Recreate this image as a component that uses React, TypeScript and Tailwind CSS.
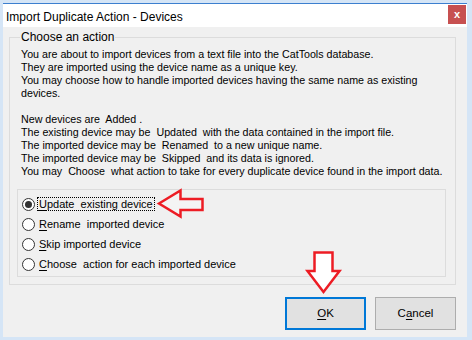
import { ReactNode } from 'react';

const ui = { fontFamily: '"Liberation Sans", Arial, sans-serif' };

function Key({ children }: { children: ReactNode }) {
  return <span className="underline underline-offset-[2px]">{children}</span>;
}

function Radio({ checked, children }: { checked?: boolean; children: ReactNode }) {
  return (
    <div className="flex items-center h-[20px]">
      <span className="w-[13px] h-[13px] rounded-full border border-[#333] bg-white flex items-center justify-center shrink-0">
        {checked && <span className="w-[7px] h-[7px] rounded-full bg-[#333]" />}
      </span>
      <span className={`ml-[3px] px-[1px] leading-[12px] whitespace-pre ${checked ? 'outline outline-1 outline-dotted outline-black' : ''}`}>
        {children}
      </span>
    </div>
  );
}

export default function App() {
  const info = [
    'You are about to import devices from a text file into the CatTools database.',
    'They are imported using the device name as a unique key.',
    'You may choose how to handle imported devices having the same name as existing',
    'devices.',
    '\u00a0',
    'New devices are  Added .',
    'The existing device may be  Updated  with the data contained in the import file.',
    'The imported device may be  Renamed  to a new unique name.',
    'The imported device may be  Skipped  and its data is ignored.',
    'You may  Choose  what action to take for every duplicate device found in the import data.',
  ];

  return (
    <div className="relative w-[472px] h-[340px] overflow-hidden bg-[#d5e5f6] pl-[3px] pt-[3px]" style={ui}>
      {/* dialog window */}
      <div className="w-[464px] h-[334px] bg-[#f0f0f0] flex flex-col border-t border-[#3c7fcf]">
        {/* title bar */}
        <div className="h-[23px] bg-white flex items-start justify-between shrink-0">
          <span className="pl-[3px] pt-[6px] text-[12px] leading-[14px] text-black">Import Duplicate Action - Devices</span>
          <div className="w-[18px] h-[19px] mr-[1px] mt-[1px] bg-[#c75050] flex items-center justify-center text-white text-[11px] font-bold leading-none">
            x
          </div>
        </div>

        <div className="flex flex-col pl-[6px] pr-[11px] pt-[4px] text-[10.7px] text-black">
          <fieldset className="border border-[#dcdcdc] pl-[7px] pb-[7px] pr-[9px] m-0">
            <legend className="ml-[3px] px-[1px] text-[12px] leading-[13px]">Choose an action</legend>
            <div className="pl-[4px] pt-[4px] leading-[13px] whitespace-pre">
              {info.map((l, i) => (
                <div key={i}>{l}</div>
              ))}
            </div>
            <div className="mt-[11px] border border-[#dcdcdc] pl-[4px] pt-[4px] pb-[2px] text-[11px]">
              <Radio checked>
                <Key>U</Key>pdate  existing device
              </Radio>
              <Radio>
                <Key>R</Key>ename  imported device
              </Radio>
              <Radio>
                <Key>S</Key>kip imported device
              </Radio>
              <Radio>
                <Key>C</Key>hoose  action for each imported device
              </Radio>
            </div>
          </fieldset>

          <div className="flex justify-end gap-[9px] mt-[12px] text-[11.5px]">
            <button className="w-[81px] h-[33px] bg-[#e1e1e1] border-2 border-[#0078d7]">
              <Key>O</Key>K
            </button>
            <button className="w-[81px] h-[33px] bg-[#e1e1e1] border border-[#adadad]">
              C<Key>a</Key>ncel
            </button>
          </div>
        </div>
      </div>

      {/* annotation arrows */}
      <svg className="absolute left-0 top-0" width="472" height="340">
        <path
          d="M159 203.5 L180.5 190.5 L180.5 199 L202.5 199 L202.5 210 L180.5 210 L180.5 216.5 Z"
          fill="#f4f4f4"
          stroke="#ed1c24"
          strokeWidth="2.5"
          strokeLinejoin="miter"
        />
        <path
          d="M314.5 252.5 L332.5 252.5 L332.5 271 L339.5 271 L323.5 292 L307.5 271 L314.5 271 Z"
          fill="#ffffff"
          stroke="#ed1c24"
          strokeWidth="2.5"
        />
      </svg>
    </div>
  );
}
